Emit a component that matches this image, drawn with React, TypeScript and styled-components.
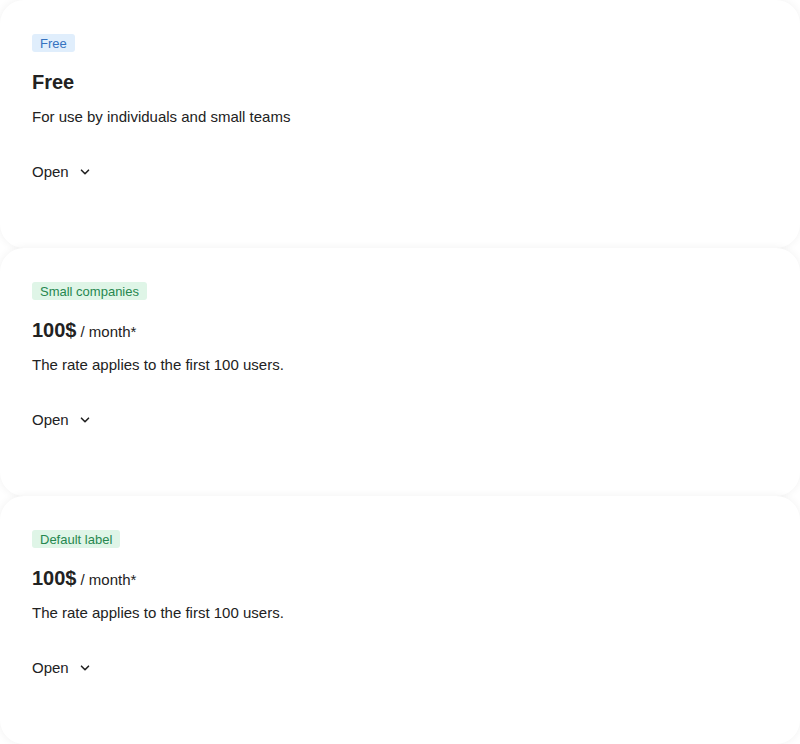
import React from "react";
import styled, { createGlobalStyle } from "styled-components";

const Global = createGlobalStyle`
  html, body { margin: 0; padding: 0; background: #ffffff; }
  body { font-family: "Liberation Sans", Arial, sans-serif; color: #222; }
`;

const List = styled.div`
  display: flex;
  flex-direction: column;
  width: 800px;
`;

const Card = styled.section`
  box-sizing: border-box;
  height: 248px;
  padding: 34px 32px;
  background: #fff;
  border-radius: 24px;
  box-shadow: 0 0 8px rgba(0, 0, 0, 0.06);
  display: flex;
  flex-direction: column;
  align-items: flex-start;
`;

const Label = styled.span<{ $tone: "blue" | "green" }>`
  display: inline-flex;
  align-items: center;
  height: 18px;
  padding: 0 8px;
  border-radius: 3px;
  font-size: 13px;
  background: ${(p) => (p.$tone === "blue" ? "#e0eefc" : "#dff5e7")};
  color: ${(p) => (p.$tone === "blue" ? "#3572c0" : "#26874f")};
`;

const Title = styled.h2`
  margin: 16px 0 0;
  height: 28px;
  font-size: 20px;
  line-height: 28px;
  font-weight: 700;
  color: #222;
  display: flex;
  align-items: baseline;
  gap: 4px;
`;

const Per = styled.span`
  font-size: 15px;
  line-height: 1;
  font-weight: 400;
`;

const Desc = styled.p`
  margin: 11px 0 0;
  font-size: 15px;
  line-height: 20px;
  color: #222;
`;

const OpenButton = styled.button`
  margin-top: 35px;
  padding: 0;
  border: none;
  background: none;
  font-family: inherit;
  font-size: 15px;
  line-height: 20px;
  color: #222;
  display: inline-flex;
  align-items: center;
  gap: 11px;
  cursor: pointer;
`;

const Chevron = () => (
  <svg width="10" height="10" viewBox="0 0 10 10" fill="none">
    <path d="M1.5 3.2 L5 6.7 L8.5 3.2" stroke="#222" strokeWidth="1.6" strokeLinecap="round" strokeLinejoin="round" />
  </svg>
);

type Plan = {
  label: string;
  tone: "blue" | "green";
  title: string;
  per?: string;
  desc: string;
};

const plans: Plan[] = [
  { label: "Free", tone: "blue", title: "Free", desc: "For use by individuals and small teams" },
  { label: "Small companies", tone: "green", title: "100$", per: "/ month*", desc: "The rate applies to the first 100 users." },
  { label: "Default label", tone: "green", title: "100$", per: "/ month*", desc: "The rate applies to the first 100 users." },
];

export default function App() {
  return (
    <>
      <Global />
      <List>
        {plans.map((p, i) => (
          <Card key={i}>
            <Label $tone={p.tone}>{p.label}</Label>
            <Title>
              {p.title}
              {p.per && <Per>{p.per}</Per>}
            </Title>
            <Desc>{p.desc}</Desc>
            <OpenButton>
              Open <Chevron />
            </OpenButton>
          </Card>
        ))}
      </List>
    </>
  );
}
